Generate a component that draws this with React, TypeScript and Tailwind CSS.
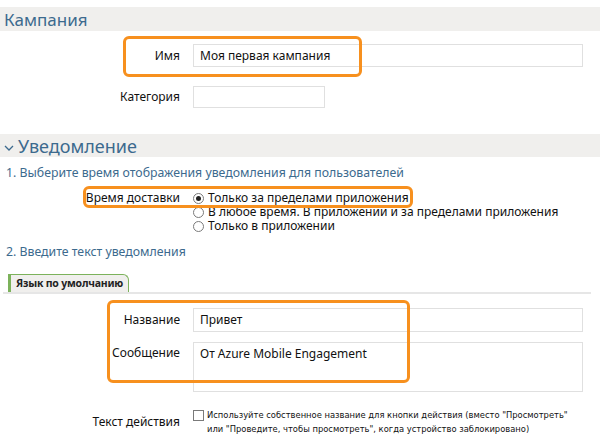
import React from "react";

const font = "font-['Noto_Sans',sans-serif]";

const Radio = ({ checked, label }: { checked?: boolean; label: string }) => (
  <div className="flex items-center h-[14px] leading-[14px]">
    <span className="w-[11px] h-[11px] rounded-full border border-[#7a7a7a] bg-white flex items-center justify-center mr-[4px]">
      {checked && <span className="w-[5px] h-[5px] rounded-full bg-[#222]" />}
    </span>
    <span className="text-[12px] text-[#111] whitespace-nowrap">{label}</span>
  </div>
);

const Highlight = ({ className }: { className: string }) => (
  <div
    className={
      "absolute border-[3px] border-[#f7901e] rounded-[6px] pointer-events-none " +
      className
    }
  />
);

export default function App() {
  return (
    <div className={`w-[600px] h-[445px] bg-white overflow-hidden ${font}`}>
      {/* Кампания */}
      <div className="mt-[7px] h-[24px] bg-[#f0efed] flex items-center pl-[4px] text-[17px] text-[#3c6a8e] leading-none">
        Кампания
      </div>

      <div className="relative mt-[13px] flex items-center h-[23px]">
        <div className="w-[180px] shrink-0 text-right text-[12px] text-[#111]">Имя</div>
        <div className="ml-[13px] w-[390px] h-[23px] border border-[#e0e0e0] flex items-center pl-[6px] text-[12px] text-[#111]">
          Моя первая кампания
        </div>
        <Highlight className="left-[123px] top-[-8px] w-[239px] h-[41px]" />
      </div>

      <div className="mt-[19px] flex items-center h-[22px]">
        <div className="w-[180px] shrink-0 text-right text-[12px] text-[#111]">Категория</div>
        <div className="ml-[13px] w-[132px] h-[22px] border border-[#e0e0e0]" />
      </div>

      {/* Уведомление */}
      <div className="mt-[26px] h-[23px] bg-[#f0efed] flex items-center pl-[4px] text-[18px] text-[#3c6a8e] leading-none">
        <svg width="10" height="6" viewBox="0 0 10 6" className="mr-[4px] mt-[4px]">
          <polyline points="1,1 5,5 9,1" fill="none" stroke="#3c6a8e" strokeWidth="1.3" />
        </svg>
        Уведомление
      </div>

      <div className="mt-[7px] pl-[6px] h-[18px] leading-[18px] text-[12.3px] text-[#3c6a8e]">
        1. Выберите время отображения уведомления для пользователей
      </div>

      <div className="relative mt-[9px] flex">
        <div className="w-[180px] shrink-0 text-right text-[12px] text-[#111] h-[14px] leading-[14px]">
          Время доставки
        </div>
        <div className="ml-[13px] flex flex-col">
          <Radio checked label="Только за пределами приложения" />
          <Radio label="В любое время. В приложении и за пределами приложения" />
          <Radio label="Только в приложении" />
        </div>
        <Highlight className="left-[83px] top-[-5px] w-[330px] h-[22px]" />
      </div>

      <div className="mt-[10px] pl-[6px] h-[18px] leading-[18px] text-[12.3px] text-[#3c6a8e]">
        2. Введите текст уведомления
      </div>

      <div className="mt-[13px] ml-[3px] w-[588px] border-b-2 border-[#e6e6e6] flex">
        <div className="ml-[5px] h-[18px] w-[121px] bg-[#f0efed] border-l-[3px] border-t border-r border-[#7cb25b] rounded-tr-[6px] flex items-center pl-[5px] text-[10.5px] font-bold text-[#222] whitespace-nowrap tracking-[-0.2px]">
          Язык по умолчанию
        </div>
      </div>

      <div className="relative mt-[14px]">
        <div className="flex items-center h-[24px]">
          <div className="w-[180px] shrink-0 text-right text-[12px] text-[#111]">Название</div>
          <div className="ml-[13px] w-[390px] h-[24px] border border-[#e0e0e0] flex items-center pl-[6px] text-[12px] text-[#111]">
            Привет
          </div>
        </div>
        <div className="mt-[10px] flex">
          <div className="w-[180px] shrink-0 text-right text-[12px] text-[#111] pt-[2px]">Сообщение</div>
          <div className="ml-[13px] w-[390px] h-[50px] border border-[#e0e0e0] pl-[6px] pt-[2px] text-[12px] text-[#111]">
            От Azure Mobile Engagement
          </div>
        </div>
        <Highlight className="left-[107px] top-[-8px] w-[303px] h-[83px]" />
      </div>

      <div className="mt-[16px] flex">
        <div className="w-[180px] shrink-0 text-right text-[12px] text-[#111] pt-[5px]">Текст действия</div>
        <div className="ml-[13px] flex">
          <span className="mt-[2px] w-[11px] h-[11px] border border-[#7a7a7a] bg-white shrink-0 mr-[3px]" />
          <div className="font-['Liberation_Sans_Narrow','DejaVu_Sans_Condensed',sans-serif] text-[9.3px] leading-[14px] text-[#111] whitespace-nowrap">
            Используйте собственное название для кнопки действия (вместо "Просмотреть"
            <br />
            или "Проведите, чтобы просмотреть", когда устройство заблокировано)
          </div>
        </div>
      </div>
    </div>
  );
}
